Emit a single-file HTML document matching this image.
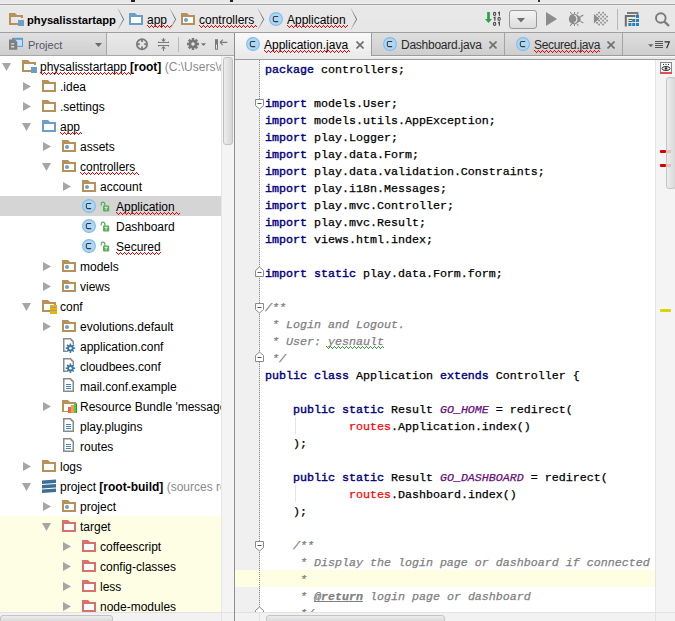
<!DOCTYPE html>
<html><head><meta charset="utf-8">
<style>
*{margin:0;padding:0;box-sizing:border-box}
html,body{width:675px;height:621px;overflow:hidden;background:#e8e8e8;font-family:"Liberation Sans",sans-serif;font-size:12px;color:#000}
.a{position:absolute}
.bc{top:7px;height:27px;line-height:27px;white-space:nowrap;font-size:12px}
.row{position:absolute;left:0;width:221px;height:20px;line-height:20px;white-space:nowrap}
.row .t{position:absolute;top:1px}
.tab{position:absolute;top:34px;height:23px;white-space:nowrap;font-size:12px;line-height:23px}
.ln{position:absolute;left:5px;margin-top:2px;height:17px;line-height:17px;white-space:pre;font-family:"Liberation Mono",monospace;font-size:11.67px;-webkit-text-stroke:0.25px currentColor}
.k{color:#000080;font-weight:normal;-webkit-text-stroke:0.4px #000080}
.c{color:#808080;font-style:italic}
.r{color:#ff0000}
.p{color:#660e7a;font-style:italic}
</style></head><body>
<div class="a" style="left:0;top:0;width:675px;height:3px;background:#e8e8e8"></div>
<div class="a" style="left:0;top:3px;width:675px;height:1px;background:#eeeeee"></div>
<div class="a" style="left:0;top:4px;width:675px;height:1px;background:#a3a3a3"></div>
<div class="a" style="left:0;top:5px;width:675px;height:27px;background:linear-gradient(#eeeeee,#e8e8e8 2px,#e7e7e7)"></div>
<div class="a" style="left:0;top:32px;width:675px;height:1px;background:#9f9f9f"></div>
<div class="a" style="left:131px;top:0;width:4px;height:2px;background:#222"></div>
<div class="a" style="left:230px;top:0;width:3px;height:2px;background:#222"></div>
<div class="a" style="left:538px;top:0;width:2px;height:2px;background:#333"></div>
<svg class="a" style="left:9px;top:13px" width="16" height="14" viewBox="0 0 16 14"><path d="M0 0H6L8 2H14V5H12V4H2V10H9V12H0Z" fill="#b8915a"/><rect x="9" y="7" width="6" height="6" fill="#6a9fc8"/></svg>
<div class="a bc" style="left:27px;font-weight:bold;font-size:11.2px">physalisstartapp</div>
<svg class="a" style="left:117px;top:8px" width="9" height="23"><defs><linearGradient id="chg1" x1="0" y1="0" x2="0" y2="1"><stop offset="0" stop-color="#d4d4d4"/><stop offset="0.5" stop-color="#505050"/><stop offset="1" stop-color="#d4d4d4"/></linearGradient></defs><path d="M0.8 0.3L6.6 11.3L0.8 21.8" fill="none" stroke="url(#chg1)" stroke-width="0.9"/></svg>
<svg class="a" style="left:129px;top:13px" width="16" height="14" viewBox="0 0 16 14"><path d="M0 0H6L8 2H14V12H0Z" fill="#6a9fc8"/><rect x="2" y="4" width="10" height="6" fill="#fff"/></svg>
<div class="a bc" style="left:147px">app</div>
<svg class="a" style="left:147px;top:25px" width="25" height="3" shape-rendering="crispEdges"><defs><pattern id="wv1" width="4" height="3" patternUnits="userSpaceOnUse"><rect x="0" y="0" width="1" height="1" fill="#ff0000"/><rect x="1" y="1" width="1" height="1" fill="#ff0000"/><rect x="2" y="2" width="1" height="1" fill="#ff0000"/><rect x="3" y="1" width="1" height="1" fill="#ff0000"/></pattern></defs><rect width="25" height="3" fill="url(#wv1)"/></svg>
<svg class="a" style="left:169px;top:8px" width="9" height="23"><defs><linearGradient id="chg2" x1="0" y1="0" x2="0" y2="1"><stop offset="0" stop-color="#d4d4d4"/><stop offset="0.5" stop-color="#505050"/><stop offset="1" stop-color="#d4d4d4"/></linearGradient></defs><path d="M0.8 0.3L6.6 11.3L0.8 21.8" fill="none" stroke="url(#chg2)" stroke-width="0.9"/></svg>
<svg class="a" style="left:181px;top:13px" width="16" height="14" viewBox="0 0 16 14"><path d="M0 0H6L8 2H14V12H0Z" fill="#b8915a"/><rect x="2" y="4" width="10" height="6" fill="#fff"/><circle cx="5" cy="7" r="2" fill="#6a9fc8"/></svg>
<div class="a bc" style="left:199px">controllers</div>
<svg class="a" style="left:199px;top:25px" width="58" height="3" shape-rendering="crispEdges"><defs><pattern id="wv2" width="4" height="3" patternUnits="userSpaceOnUse"><rect x="0" y="0" width="1" height="1" fill="#ff0000"/><rect x="1" y="1" width="1" height="1" fill="#ff0000"/><rect x="2" y="2" width="1" height="1" fill="#ff0000"/><rect x="3" y="1" width="1" height="1" fill="#ff0000"/></pattern></defs><rect width="58" height="3" fill="url(#wv2)"/></svg>
<svg class="a" style="left:257px;top:8px" width="9" height="23"><defs><linearGradient id="chg3" x1="0" y1="0" x2="0" y2="1"><stop offset="0" stop-color="#d4d4d4"/><stop offset="0.5" stop-color="#505050"/><stop offset="1" stop-color="#d4d4d4"/></linearGradient></defs><path d="M0.8 0.3L6.6 11.3L0.8 21.8" fill="none" stroke="url(#chg3)" stroke-width="0.9"/></svg>
<svg class="a" style="left:269px;top:12px" width="14" height="14" viewBox="0 0 14 14"><circle cx="7" cy="7" r="6.4" fill="#acd8f6" stroke="#80bce8" stroke-width="1.1"/><path d="M9.2 4.4H5.6Q4.3 4.4 4.3 5.7V8.3Q4.3 9.6 5.6 9.6H9.2" fill="none" stroke="#383838" stroke-width="1.05"/></svg>
<div class="a bc" style="left:287px">Application</div>
<svg class="a" style="left:287px;top:25px" width="61" height="3" shape-rendering="crispEdges"><defs><pattern id="wv3" width="4" height="3" patternUnits="userSpaceOnUse"><rect x="0" y="0" width="1" height="1" fill="#ff0000"/><rect x="1" y="1" width="1" height="1" fill="#ff0000"/><rect x="2" y="2" width="1" height="1" fill="#ff0000"/><rect x="3" y="1" width="1" height="1" fill="#ff0000"/></pattern></defs><rect width="61" height="3" fill="url(#wv3)"/></svg>
<svg class="a" style="left:350px;top:8px" width="9" height="23"><defs><linearGradient id="chg4" x1="0" y1="0" x2="0" y2="1"><stop offset="0" stop-color="#d4d4d4"/><stop offset="0.5" stop-color="#505050"/><stop offset="1" stop-color="#d4d4d4"/></linearGradient></defs><path d="M0.8 0.3L6.6 11.3L0.8 21.8" fill="none" stroke="url(#chg4)" stroke-width="0.9"/></svg>
<svg class="a" style="left:0;top:0" width="675" height="33"><path d="M488.5 12V19.5" stroke="#2ea043" stroke-width="2.7"/><path d="M485 19H492L488.5 23Z" fill="#2ea043"/><ellipse cx="494.6" cy="13.9" rx="1.15" ry="1.5" fill="none" stroke="#4a4a4a" stroke-width="1.1"/><path d="M498.1 13L499.4 12.2V15.7" fill="none" stroke="#4a4a4a" stroke-width="1.2"/><path d="M493.6 18L494.9 17.2V20.7" fill="none" stroke="#4a4a4a" stroke-width="1.2"/><ellipse cx="499.1" cy="18.9" rx="1.15" ry="1.5" fill="none" stroke="#4a4a4a" stroke-width="1.1"/><ellipse cx="494.6" cy="23.9" rx="1.15" ry="1.5" fill="none" stroke="#4a4a4a" stroke-width="1.1"/><path d="M498.1 23L499.4 22.2V25.7" fill="none" stroke="#4a4a4a" stroke-width="1.2"/><path d="M546 12L557 19L546 26Z" fill="#8c8c8c"/><circle cx="574" cy="19" r="5.2" fill="#8c8c8c"/><circle cx="577" cy="19" r="3.6" fill="#8c8c8c"/><path d="M574.2 15A4.3 4.3 0 0 1 574.2 23" fill="none" stroke="#e8e8e8" stroke-width="1.1"/><path d="M583.4 15.4A3 3 0 0 0 580.4 17.4M583.4 22.6A3 3 0 0 1 580.4 20.6" fill="none" stroke="#8c8c8c" stroke-width="1.1"/><path d="M570.2 12.2L571.6 14M574.5 12V14M578.4 12.2L577.2 14M570.2 25.8L571.6 24M574.5 26V24M578.4 25.8L577.2 24" stroke="#8c8c8c" stroke-width="1.1"/><path d="M593.9 13.9L599.4 18.8L593.9 23.6Z" fill="#8c8c8c"/><rect x="598.2" y="11.799999999999999" width="1.7" height="1.7" fill="#8c8c8c"/><rect x="602.2" y="11.799999999999999" width="1.7" height="1.7" fill="#8c8c8c"/><rect x="596.2" y="13.799999999999999" width="1.7" height="1.7" fill="#8c8c8c"/><rect x="600.2" y="13.799999999999999" width="1.7" height="1.7" fill="#8c8c8c"/><rect x="604.2" y="13.799999999999999" width="1.7" height="1.7" fill="#8c8c8c"/><rect x="598.2" y="15.8" width="1.7" height="1.7" fill="#8c8c8c"/><rect x="602.2" y="15.8" width="1.7" height="1.7" fill="#8c8c8c"/><rect x="606.2" y="15.8" width="1.7" height="1.7" fill="#8c8c8c"/><rect x="600.2" y="17.8" width="1.7" height="1.7" fill="#8c8c8c"/><rect x="604.2" y="17.8" width="1.7" height="1.7" fill="#8c8c8c"/><rect x="602.2" y="19.8" width="1.7" height="1.7" fill="#8c8c8c"/><rect x="606.2" y="19.8" width="1.7" height="1.7" fill="#8c8c8c"/><rect x="600.2" y="21.8" width="1.7" height="1.7" fill="#8c8c8c"/><rect x="604.2" y="21.8" width="1.7" height="1.7" fill="#8c8c8c"/><rect x="596.2" y="22.0" width="1.7" height="1.7" fill="#8c8c8c"/><rect x="598.2" y="23.7" width="1.7" height="1.7" fill="#8c8c8c"/><rect x="602.2" y="23.7" width="1.7" height="1.7" fill="#8c8c8c"/><rect x="598.2" y="19.8" width="1.7" height="1.7" fill="#8c8c8c"/><path d="M627 13H637.5V17.5" fill="none" stroke="#7a7a7a" stroke-width="1.8"/><path d="M624.8 15H635.5V17H626.8V26.5H624.8Z" fill="#6e6e6e"/><path d="M628.5 19.5H632M628.5 21.5H632" stroke="#555" stroke-width="1"/><rect x="636" y="15" width="3" height="3" fill="#2a7fc0"/><rect x="632.2" y="19" width="3" height="3" fill="#2a7fc0"/><rect x="636" y="19" width="3" height="3" fill="#2a7fc0"/><rect x="628.4" y="23" width="3" height="3" fill="#2a7fc0"/><rect x="632.2" y="23" width="3" height="3" fill="#2a7fc0"/><rect x="636" y="23" width="3" height="3" fill="#2a7fc0"/><circle cx="660.8" cy="18" r="4.8" fill="none" stroke="#7a7a7a" stroke-width="1.9"/><path d="M664.3 21.5L669 26" stroke="#7a7a7a" stroke-width="2.4"/></svg>
<div class="a" style="left:509px;top:10px;width:28px;height:19px;border:1px solid #9a9a9a;border-radius:3px;background:linear-gradient(#f4f4f4,#dcdcdc)"></div>
<svg class="a" style="left:517px;top:18px" width="9" height="6"><path d="M0 0H8L4 4.5Z" fill="#6e6e6e"/></svg>
<div class="a" style="left:617px;top:9px;width:1px;height:21px;background:#b8b8b8"></div>
<div class="a" style="left:0;top:33px;width:234px;height:22px;background:linear-gradient(#e9e9e9,#dedede)"></div>
<div class="a" style="left:0;top:33px;width:106px;height:22px;background:linear-gradient(#e0e0e0,#cecece)"></div>
<div class="a" style="left:106px;top:33px;width:1px;height:22px;background:#a8a8a8"></div>
<div class="a" style="left:0;top:55px;width:234px;height:1px;background:#a8a8a8"></div>
<svg class="a" style="left:0;top:33px" width="30" height="22" viewBox="0 33 30 22"><rect x="12" y="37.8" width="11" height="9" fill="#5b9bd5"/><rect x="13" y="39.8" width="9" height="6" fill="#bfe0f6"/><path d="M9 39.6H15L17.3 41.9V49.8H9Z" fill="#7f7f7f"/><path d="M11.2 43.2H14.2V44.6H11.2ZM11.2 46H14.2V47.6H11.2Z" fill="#e0e0e0"/></svg>
<div class="a" style="left:28px;top:34px;height:22px;line-height:22px;font-size:11px;color:#555566">Project</div>
<svg class="a" style="left:95px;top:43px" width="8" height="5"><path d="M0 0H7L3.5 4Z" fill="#6a6a6a"/></svg>
<svg class="a" style="left:0;top:33px" width="234" height="22" viewBox="0 33 234 22"><circle cx="142" cy="44.2" r="5.1" fill="none" stroke="#7a7a7a" stroke-width="1.8"/><path d="M142 39.5V42M142 46.4V49M137.3 44.2H139.8M144.2 44.2H146.7" stroke="#7a7a7a" stroke-width="1.8"/><path d="M158.5 41.5V42.5H168.5V41.5M158.5 46.5V45.5H168.5V46.5" fill="none" stroke="#7a7a7a" stroke-width="1.1"/><path d="M163.5 38V41M163.5 47V51" stroke="#7a7a7a" stroke-width="1.1"/><path d="M161 39.5H166L163.5 42Z M161 48.5H166L163.5 46Z" fill="#7a7a7a"/><g transform="translate(193,44)"><circle r="4.3" fill="#787878"/><rect x="-1.3" y="-6" width="2.6" height="3" fill="#787878" transform="rotate(0)"/><rect x="-1.3" y="-6" width="2.6" height="3" fill="#787878" transform="rotate(45)"/><rect x="-1.3" y="-6" width="2.6" height="3" fill="#787878" transform="rotate(90)"/><rect x="-1.3" y="-6" width="2.6" height="3" fill="#787878" transform="rotate(135)"/><rect x="-1.3" y="-6" width="2.6" height="3" fill="#787878" transform="rotate(180)"/><rect x="-1.3" y="-6" width="2.6" height="3" fill="#787878" transform="rotate(225)"/><rect x="-1.3" y="-6" width="2.6" height="3" fill="#787878" transform="rotate(270)"/><rect x="-1.3" y="-6" width="2.6" height="3" fill="#787878" transform="rotate(315)"/><circle r="1.7" fill="#e6e6e6"/></g><path d="M201 43.3H206L203.5 46Z" fill="#777"/><rect x="215" y="39.2" width="3" height="10.5" fill="#7a7a7a"/><rect x="216" y="44.5" width="1" height="4.2" fill="#e6e6e6"/><path d="M220 42.4H227.3M220 42.4L222.8 39.6M220 42.4L222.8 45.2" fill="none" stroke="#7a7a7a" stroke-width="1.2"/></svg>
<div class="a" style="left:178px;top:37px;width:1px;height:15px;background:#b8b8b8"></div>
<div class="a" style="left:0;top:56px;width:221px;height:556px;background:#fff;overflow:hidden">
<div class="row" style="top:0px;">
<svg class="a" style="left:2px;top:7px" width="10" height="9"><path d="M0 0H9L4.5 8Z" fill="#a6a6a6"/></svg>
<svg class="a" style="left:22px;top:4px" width="16" height="14" viewBox="0 0 16 14"><path d="M0 0H6L8 2H14V5H12V4H2V10H9V12H0Z" fill="#b8915a"/><rect x="9" y="7" width="6" height="6" fill="#6a9fc8"/></svg>
<div class="t" style="left:40px">physalisstartapp <b>[root]</b> <span style="color:#8a8a8a">(C:\Users\c</span></div>
</div>
<div class="row" style="top:20px;">
<svg class="a" style="left:23px;top:6px" width="9" height="10"><path d="M0 0L8 4.5L0 9Z" fill="#a6a6a6"/></svg>
<svg class="a" style="left:42px;top:4px" width="16" height="14" viewBox="0 0 16 14"><path d="M0 0H6L8 2H14V12H0Z" fill="#b8915a"/><rect x="2" y="4" width="10" height="6" fill="#fff"/></svg>
<div class="t" style="left:60px">.idea</div>
</div>
<div class="row" style="top:40px;">
<svg class="a" style="left:23px;top:6px" width="9" height="10"><path d="M0 0L8 4.5L0 9Z" fill="#a6a6a6"/></svg>
<svg class="a" style="left:42px;top:4px" width="16" height="14" viewBox="0 0 16 14"><path d="M0 0H6L8 2H14V12H0Z" fill="#b8915a"/><rect x="2" y="4" width="10" height="6" fill="#fff"/></svg>
<div class="t" style="left:60px">.settings</div>
</div>
<div class="row" style="top:60px;">
<svg class="a" style="left:22px;top:7px" width="10" height="9"><path d="M0 0H9L4.5 8Z" fill="#a6a6a6"/></svg>
<svg class="a" style="left:42px;top:4px" width="16" height="14" viewBox="0 0 16 14"><path d="M0 0H6L8 2H14V12H0Z" fill="#6a9fc8"/><rect x="2" y="4" width="10" height="6" fill="#fff"/></svg>
<div class="t" style="left:60px">app</div>
</div>
<div class="row" style="top:80px;">
<svg class="a" style="left:43px;top:6px" width="9" height="10"><path d="M0 0L8 4.5L0 9Z" fill="#a6a6a6"/></svg>
<svg class="a" style="left:62px;top:4px" width="16" height="14" viewBox="0 0 16 14"><path d="M0 0H6L8 2H14V12H0Z" fill="#b8915a"/><rect x="2" y="4" width="10" height="6" fill="#fff"/><circle cx="5" cy="7" r="2" fill="#6a9fc8"/></svg>
<div class="t" style="left:80px">assets</div>
</div>
<div class="row" style="top:100px;">
<svg class="a" style="left:42px;top:7px" width="10" height="9"><path d="M0 0H9L4.5 8Z" fill="#a6a6a6"/></svg>
<svg class="a" style="left:62px;top:4px" width="16" height="14" viewBox="0 0 16 14"><path d="M0 0H6L8 2H14V12H0Z" fill="#b8915a"/><rect x="2" y="4" width="10" height="6" fill="#fff"/><circle cx="5" cy="7" r="2" fill="#6a9fc8"/></svg>
<div class="t" style="left:80px">controllers</div>
</div>
<div class="row" style="top:120px;">
<svg class="a" style="left:63px;top:6px" width="9" height="10"><path d="M0 0L8 4.5L0 9Z" fill="#a6a6a6"/></svg>
<svg class="a" style="left:82px;top:4px" width="16" height="14" viewBox="0 0 16 14"><path d="M0 0H6L8 2H14V12H0Z" fill="#b8915a"/><rect x="2" y="4" width="10" height="6" fill="#fff"/><circle cx="5" cy="7" r="2" fill="#6a9fc8"/></svg>
<div class="t" style="left:100px">account</div>
</div>
<div class="row" style="top:140px;background:#d5d5d5;">
<svg class="a" style="left:82px;top:3px" width="14" height="14" viewBox="0 0 14 14"><circle cx="7" cy="7" r="6.4" fill="#acd8f6" stroke="#80bce8" stroke-width="1.1"/><path d="M9.2 4.4H5.6Q4.3 4.4 4.3 5.7V8.3Q4.3 9.6 5.6 9.6H9.2" fill="none" stroke="#383838" stroke-width="1.05"/></svg>
<svg class="a" style="left:100px;top:5px" width="10" height="11" viewBox="0 0 10 11"><path d="M1.2 4.6V3A1.8 1.8 0 0 1 4.8 3V5" fill="none" stroke="#5aae5a" stroke-width="1.2"/><rect x="3" y="4.6" width="6.2" height="5.8" rx="0.9" fill="#5aae5a"/><path d="M4.6 6.4H7.6M6.1 6.4V9.2" stroke="#e6f2e6" stroke-width="1"/></svg>
<div class="t" style="left:116px">Application</div>
</div>
<div class="row" style="top:160px;">
<svg class="a" style="left:82px;top:3px" width="14" height="14" viewBox="0 0 14 14"><circle cx="7" cy="7" r="6.4" fill="#acd8f6" stroke="#80bce8" stroke-width="1.1"/><path d="M9.2 4.4H5.6Q4.3 4.4 4.3 5.7V8.3Q4.3 9.6 5.6 9.6H9.2" fill="none" stroke="#383838" stroke-width="1.05"/></svg>
<svg class="a" style="left:100px;top:5px" width="10" height="11" viewBox="0 0 10 11"><path d="M1.2 4.6V3A1.8 1.8 0 0 1 4.8 3V5" fill="none" stroke="#5aae5a" stroke-width="1.2"/><rect x="3" y="4.6" width="6.2" height="5.8" rx="0.9" fill="#5aae5a"/><path d="M4.6 6.4H7.6M6.1 6.4V9.2" stroke="#e6f2e6" stroke-width="1"/></svg>
<div class="t" style="left:116px">Dashboard</div>
</div>
<div class="row" style="top:180px;">
<svg class="a" style="left:82px;top:3px" width="14" height="14" viewBox="0 0 14 14"><circle cx="7" cy="7" r="6.4" fill="#acd8f6" stroke="#80bce8" stroke-width="1.1"/><path d="M9.2 4.4H5.6Q4.3 4.4 4.3 5.7V8.3Q4.3 9.6 5.6 9.6H9.2" fill="none" stroke="#383838" stroke-width="1.05"/></svg>
<svg class="a" style="left:100px;top:5px" width="10" height="11" viewBox="0 0 10 11"><path d="M1.2 4.6V3A1.8 1.8 0 0 1 4.8 3V5" fill="none" stroke="#5aae5a" stroke-width="1.2"/><rect x="3" y="4.6" width="6.2" height="5.8" rx="0.9" fill="#5aae5a"/><path d="M4.6 6.4H7.6M6.1 6.4V9.2" stroke="#e6f2e6" stroke-width="1"/></svg>
<div class="t" style="left:116px">Secured</div>
</div>
<div class="row" style="top:200px;">
<svg class="a" style="left:43px;top:6px" width="9" height="10"><path d="M0 0L8 4.5L0 9Z" fill="#a6a6a6"/></svg>
<svg class="a" style="left:62px;top:4px" width="16" height="14" viewBox="0 0 16 14"><path d="M0 0H6L8 2H14V12H0Z" fill="#b8915a"/><rect x="2" y="4" width="10" height="6" fill="#fff"/><circle cx="5" cy="7" r="2" fill="#6a9fc8"/></svg>
<div class="t" style="left:80px">models</div>
</div>
<div class="row" style="top:220px;">
<svg class="a" style="left:43px;top:6px" width="9" height="10"><path d="M0 0L8 4.5L0 9Z" fill="#a6a6a6"/></svg>
<svg class="a" style="left:62px;top:4px" width="16" height="14" viewBox="0 0 16 14"><path d="M0 0H6L8 2H14V12H0Z" fill="#b8915a"/><rect x="2" y="4" width="10" height="6" fill="#fff"/><circle cx="5" cy="7" r="2" fill="#6a9fc8"/></svg>
<div class="t" style="left:80px">views</div>
</div>
<div class="row" style="top:240px;">
<svg class="a" style="left:22px;top:7px" width="10" height="9"><path d="M0 0H9L4.5 8Z" fill="#a6a6a6"/></svg>
<svg class="a" style="left:42px;top:4px" width="16" height="14" viewBox="0 0 16 14"><path d="M0 0H6L8 2H14V5H12V4H2V10H9V12H0Z" fill="#b8915a"/><rect x="8" y="5" width="7" height="9" fill="#f0b400"/><path d="M8 7.5H15M8 10.5H15" stroke="#9a9a9a" stroke-width="1"/></svg>
<div class="t" style="left:60px">conf</div>
</div>
<div class="row" style="top:260px;">
<svg class="a" style="left:43px;top:6px" width="9" height="10"><path d="M0 0L8 4.5L0 9Z" fill="#a6a6a6"/></svg>
<svg class="a" style="left:62px;top:4px" width="16" height="14" viewBox="0 0 16 14"><path d="M0 0H6L8 2H14V12H0Z" fill="#b8915a"/><rect x="2" y="4" width="10" height="6" fill="#fff"/><circle cx="5" cy="7" r="2" fill="#6a9fc8"/></svg>
<div class="t" style="left:80px">evolutions.default</div>
</div>
<div class="row" style="top:280px;">
<svg class="a" style="left:62px;top:1px" width="14" height="16" viewBox="0 0 14 16"><path d="M1.75 1.75H8.5L11.25 4.5V14.25H1.75Z" fill="#fff" stroke="#8a8a8a" stroke-width="1.5"/><path d="M8.8 1.8V4.2H11.2Z" fill="#8a8a8a"/><g transform="translate(8.4,11.2)"><circle r="4.8" fill="#fff"/><circle r="3.2" fill="#3a79a5"/><rect x="-0.8" y="-4.7" width="1.6" height="2.5" fill="#3a79a5" transform="rotate(0)"/><rect x="-0.8" y="-4.7" width="1.6" height="2.5" fill="#3a79a5" transform="rotate(45)"/><rect x="-0.8" y="-4.7" width="1.6" height="2.5" fill="#3a79a5" transform="rotate(90)"/><rect x="-0.8" y="-4.7" width="1.6" height="2.5" fill="#3a79a5" transform="rotate(135)"/><rect x="-0.8" y="-4.7" width="1.6" height="2.5" fill="#3a79a5" transform="rotate(180)"/><rect x="-0.8" y="-4.7" width="1.6" height="2.5" fill="#3a79a5" transform="rotate(225)"/><rect x="-0.8" y="-4.7" width="1.6" height="2.5" fill="#3a79a5" transform="rotate(270)"/><rect x="-0.8" y="-4.7" width="1.6" height="2.5" fill="#3a79a5" transform="rotate(315)"/><circle r="1.3" fill="#fff"/></g></svg>
<div class="t" style="left:80px">application.conf</div>
</div>
<div class="row" style="top:300px;">
<svg class="a" style="left:62px;top:1px" width="14" height="16" viewBox="0 0 14 16"><path d="M1.75 1.75H8.5L11.25 4.5V14.25H1.75Z" fill="#fff" stroke="#8a8a8a" stroke-width="1.5"/><path d="M8.8 1.8V4.2H11.2Z" fill="#8a8a8a"/><g transform="translate(8.4,11.2)"><circle r="4.8" fill="#fff"/><circle r="3.2" fill="#3a79a5"/><rect x="-0.8" y="-4.7" width="1.6" height="2.5" fill="#3a79a5" transform="rotate(0)"/><rect x="-0.8" y="-4.7" width="1.6" height="2.5" fill="#3a79a5" transform="rotate(45)"/><rect x="-0.8" y="-4.7" width="1.6" height="2.5" fill="#3a79a5" transform="rotate(90)"/><rect x="-0.8" y="-4.7" width="1.6" height="2.5" fill="#3a79a5" transform="rotate(135)"/><rect x="-0.8" y="-4.7" width="1.6" height="2.5" fill="#3a79a5" transform="rotate(180)"/><rect x="-0.8" y="-4.7" width="1.6" height="2.5" fill="#3a79a5" transform="rotate(225)"/><rect x="-0.8" y="-4.7" width="1.6" height="2.5" fill="#3a79a5" transform="rotate(270)"/><rect x="-0.8" y="-4.7" width="1.6" height="2.5" fill="#3a79a5" transform="rotate(315)"/><circle r="1.3" fill="#fff"/></g></svg>
<div class="t" style="left:80px">cloudbees.conf</div>
</div>
<div class="row" style="top:320px;">
<svg class="a" style="left:62px;top:1px" width="14" height="16" viewBox="0 0 14 16"><path d="M1.75 1.75H8.5L11.25 4.5V14.25H1.75Z" fill="#fff" stroke="#8a8a8a" stroke-width="1.5"/><path d="M8.8 1.8V4.2H11.2Z" fill="#8a8a8a"/><path d="M4 7.5H9M4 9.5H9M4 11.5H9" stroke="#3d85c0" stroke-width="1"/></svg>
<div class="t" style="left:80px">mail.conf.example</div>
</div>
<div class="row" style="top:340px;">
<svg class="a" style="left:43px;top:6px" width="9" height="10"><path d="M0 0L8 4.5L0 9Z" fill="#a6a6a6"/></svg>
<svg class="a" style="left:62px;top:4px" width="16" height="14" viewBox="0 0 16 14"><path d="M0 0H6L8 2H14V4H12V4H2V11H6V12H0Z" fill="#b8915a"/><rect x="6" y="7" width="3" height="6" fill="#e8625a"/><rect x="9" y="5" width="3" height="8" fill="#f0a040"/><rect x="12" y="3.5" width="3" height="9.5" fill="#4cc84c"/><path d="M14.5 3.5V13" stroke="#2a9a2a" stroke-width="1"/></svg>
<div class="t" style="left:80px">Resource Bundle 'messages'</div>
</div>
<div class="row" style="top:360px;">
<svg class="a" style="left:62px;top:1px" width="14" height="16" viewBox="0 0 14 16"><path d="M1.75 1.75H8.5L11.25 4.5V14.25H1.75Z" fill="#fff" stroke="#8a8a8a" stroke-width="1.5"/><path d="M8.8 1.8V4.2H11.2Z" fill="#8a8a8a"/><path d="M4 7.5H9M4 9.5H9M4 11.5H9" stroke="#3d85c0" stroke-width="1"/></svg>
<div class="t" style="left:80px">play.plugins</div>
</div>
<div class="row" style="top:380px;">
<svg class="a" style="left:62px;top:1px" width="14" height="16" viewBox="0 0 14 16"><path d="M1.75 1.75H8.5L11.25 4.5V14.25H1.75Z" fill="#fff" stroke="#8a8a8a" stroke-width="1.5"/><path d="M8.8 1.8V4.2H11.2Z" fill="#8a8a8a"/><path d="M4 7.5H9M4 9.5H9M4 11.5H9" stroke="#3d85c0" stroke-width="1"/></svg>
<div class="t" style="left:80px">routes</div>
</div>
<div class="row" style="top:400px;">
<svg class="a" style="left:23px;top:6px" width="9" height="10"><path d="M0 0L8 4.5L0 9Z" fill="#a6a6a6"/></svg>
<svg class="a" style="left:42px;top:4px" width="16" height="14" viewBox="0 0 16 14"><path d="M0 0H6L8 2H14V12H0Z" fill="#b8915a"/><rect x="2" y="4" width="10" height="6" fill="#fff"/></svg>
<div class="t" style="left:60px">logs</div>
</div>
<div class="row" style="top:420px;">
<svg class="a" style="left:22px;top:7px" width="10" height="9"><path d="M0 0H9L4.5 8Z" fill="#a6a6a6"/></svg>
<svg class="a" style="left:42px;top:3px" width="15" height="15" viewBox="0 0 15 15"><path d="M0 1.5L14 0.5V4L0 5Z M0 6L14 5V8.5L0 9.5Z M0 10.5L14 9.5V13L0 14Z" fill="#3c6e96"/></svg>
<div class="t" style="left:60px">project <b>[root-build]</b> <span style="color:#8a8a8a">(sources root)</span></div>
</div>
<div class="row" style="top:440px;">
<svg class="a" style="left:43px;top:6px" width="9" height="10"><path d="M0 0L8 4.5L0 9Z" fill="#a6a6a6"/></svg>
<svg class="a" style="left:62px;top:4px" width="16" height="14" viewBox="0 0 16 14"><path d="M0 0H6L8 2H14V12H0Z" fill="#b8915a"/><rect x="2" y="4" width="10" height="6" fill="#fff"/><circle cx="5" cy="7" r="2" fill="#6a9fc8"/></svg>
<div class="t" style="left:80px">project</div>
</div>
<div class="row" style="top:460px;background:#fefee4;">
<svg class="a" style="left:42px;top:7px" width="10" height="9"><path d="M0 0H9L4.5 8Z" fill="#a6a6a6"/></svg>
<svg class="a" style="left:62px;top:4px" width="16" height="14" viewBox="0 0 16 14"><path d="M0 0H6L8 2H14V12H0Z" fill="#d9706a"/><rect x="2" y="4" width="10" height="6" fill="#fff"/></svg>
<div class="t" style="left:80px">target</div>
</div>
<div class="row" style="top:480px;background:#fefee4;">
<svg class="a" style="left:63px;top:6px" width="9" height="10"><path d="M0 0L8 4.5L0 9Z" fill="#a6a6a6"/></svg>
<svg class="a" style="left:82px;top:4px" width="16" height="14" viewBox="0 0 16 14"><path d="M0 0H6L8 2H14V12H0Z" fill="#d9706a"/><rect x="2" y="4" width="10" height="6" fill="#fff"/></svg>
<div class="t" style="left:100px">coffeescript</div>
</div>
<div class="row" style="top:500px;background:#fefee4;">
<svg class="a" style="left:63px;top:6px" width="9" height="10"><path d="M0 0L8 4.5L0 9Z" fill="#a6a6a6"/></svg>
<svg class="a" style="left:82px;top:4px" width="16" height="14" viewBox="0 0 16 14"><path d="M0 0H6L8 2H14V12H0Z" fill="#d9706a"/><rect x="2" y="4" width="10" height="6" fill="#fff"/></svg>
<div class="t" style="left:100px">config-classes</div>
</div>
<div class="row" style="top:520px;background:#fefee4;">
<svg class="a" style="left:63px;top:6px" width="9" height="10"><path d="M0 0L8 4.5L0 9Z" fill="#a6a6a6"/></svg>
<svg class="a" style="left:82px;top:4px" width="16" height="14" viewBox="0 0 16 14"><path d="M0 0H6L8 2H14V12H0Z" fill="#d9706a"/><rect x="2" y="4" width="10" height="6" fill="#fff"/></svg>
<div class="t" style="left:100px">less</div>
</div>
<div class="row" style="top:540px;background:#fefee4;">
<svg class="a" style="left:63px;top:6px" width="9" height="10"><path d="M0 0L8 4.5L0 9Z" fill="#a6a6a6"/></svg>
<svg class="a" style="left:82px;top:4px" width="16" height="14" viewBox="0 0 16 14"><path d="M0 0H6L8 2H14V12H0Z" fill="#d9706a"/><rect x="2" y="4" width="10" height="6" fill="#fff"/></svg>
<div class="t" style="left:100px">node-modules</div>
</div>
<svg class="a" style="left:40px;top:16px" width="92" height="3" shape-rendering="crispEdges"><defs><pattern id="wv4" width="4" height="3" patternUnits="userSpaceOnUse"><rect x="0" y="0" width="1" height="1" fill="#ff0000"/><rect x="1" y="1" width="1" height="1" fill="#ff0000"/><rect x="2" y="2" width="1" height="1" fill="#ff0000"/><rect x="3" y="1" width="1" height="1" fill="#ff0000"/></pattern></defs><rect width="92" height="3" fill="url(#wv4)"/></svg>
<svg class="a" style="left:60px;top:76px" width="22" height="3" shape-rendering="crispEdges"><defs><pattern id="wv5" width="4" height="3" patternUnits="userSpaceOnUse"><rect x="0" y="0" width="1" height="1" fill="#ff0000"/><rect x="1" y="1" width="1" height="1" fill="#ff0000"/><rect x="2" y="2" width="1" height="1" fill="#ff0000"/><rect x="3" y="1" width="1" height="1" fill="#ff0000"/></pattern></defs><rect width="22" height="3" fill="url(#wv5)"/></svg>
<svg class="a" style="left:80px;top:116px" width="59" height="3" shape-rendering="crispEdges"><defs><pattern id="wv6" width="4" height="3" patternUnits="userSpaceOnUse"><rect x="0" y="0" width="1" height="1" fill="#ff0000"/><rect x="1" y="1" width="1" height="1" fill="#ff0000"/><rect x="2" y="2" width="1" height="1" fill="#ff0000"/><rect x="3" y="1" width="1" height="1" fill="#ff0000"/></pattern></defs><rect width="59" height="3" fill="url(#wv6)"/></svg>
<svg class="a" style="left:116px;top:156px" width="64" height="3" shape-rendering="crispEdges"><defs><pattern id="wv7" width="4" height="3" patternUnits="userSpaceOnUse"><rect x="0" y="0" width="1" height="1" fill="#ff0000"/><rect x="1" y="1" width="1" height="1" fill="#ff0000"/><rect x="2" y="2" width="1" height="1" fill="#ff0000"/><rect x="3" y="1" width="1" height="1" fill="#ff0000"/></pattern></defs><rect width="64" height="3" fill="url(#wv7)"/></svg>
<svg class="a" style="left:116px;top:196px" width="45" height="3" shape-rendering="crispEdges"><defs><pattern id="wv8" width="4" height="3" patternUnits="userSpaceOnUse"><rect x="0" y="0" width="1" height="1" fill="#ff0000"/><rect x="1" y="1" width="1" height="1" fill="#ff0000"/><rect x="2" y="2" width="1" height="1" fill="#ff0000"/><rect x="3" y="1" width="1" height="1" fill="#ff0000"/></pattern></defs><rect width="45" height="3" fill="url(#wv8)"/></svg>
</div>
<div class="a" style="left:221px;top:56px;width:13px;height:556px;background:#f4f4f4;border-left:1px solid #e6e6e6"></div>
<div class="a" style="left:223px;top:57px;width:10px;height:88px;border:1px solid #c0c0c0;border-radius:3px;background:linear-gradient(90deg,#ececec,#d6d6d6)"></div>
<div class="a" style="left:234px;top:33px;width:1px;height:588px;background:#8f8f8f"></div>
<div class="a" style="left:235px;top:33px;width:440px;height:26px;background:#e9e9e9"></div>
<div class="a" style="left:371px;top:33px;width:304px;height:22px;background:linear-gradient(#dedede,#cecece)"></div>
<div class="a" style="left:371px;top:55px;width:304px;height:1px;background:#9c9c9c"></div>
<div class="a" style="left:371px;top:56px;width:304px;height:1px;background:#f8f8f8"></div>
<div class="a" style="left:235px;top:33px;width:136px;height:26px;background:linear-gradient(#f9f9f9,#e9e9e9)"></div>
<div class="a" style="left:371px;top:33px;width:1px;height:23px;background:#9c9c9c"></div>
<div class="a" style="left:504px;top:33px;width:1px;height:22px;background:#a4a4a4"></div>
<div class="a" style="left:622px;top:33px;width:1px;height:22px;background:#a4a4a4"></div>
<div class="a" style="left:235px;top:59px;width:440px;height:1px;background:#9d9d9d"></div>
<svg class="a" style="left:246px;top:37px" width="14" height="14" viewBox="0 0 14 14"><circle cx="7" cy="7" r="6.4" fill="#acd8f6" stroke="#80bce8" stroke-width="1.1"/><path d="M9.2 4.4H5.6Q4.3 4.4 4.3 5.7V8.3Q4.3 9.6 5.6 9.6H9.2" fill="none" stroke="#383838" stroke-width="1.05"/></svg>
<div class="tab" style="left:264px">Application.java</div>
<svg class="a" style="left:264px;top:50px" width="86" height="3" shape-rendering="crispEdges"><defs><pattern id="wv9" width="4" height="3" patternUnits="userSpaceOnUse"><rect x="0" y="0" width="1" height="1" fill="#ff0000"/><rect x="1" y="1" width="1" height="1" fill="#ff0000"/><rect x="2" y="2" width="1" height="1" fill="#ff0000"/><rect x="3" y="1" width="1" height="1" fill="#ff0000"/></pattern></defs><rect width="86" height="3" fill="url(#wv9)"/></svg>
<svg class="a" style="left:356px;top:41px" width="8" height="8"><path d="M0.5 0.5L7.5 7.5M7.5 0.5L0.5 7.5" stroke="#6e6e6e" stroke-width="1.6"/></svg>
<svg class="a" style="left:383px;top:37px" width="14" height="14" viewBox="0 0 14 14"><circle cx="7" cy="7" r="6.4" fill="#acd8f6" stroke="#80bce8" stroke-width="1.1"/><path d="M9.2 4.4H5.6Q4.3 4.4 4.3 5.7V8.3Q4.3 9.6 5.6 9.6H9.2" fill="none" stroke="#383838" stroke-width="1.05"/></svg>
<div class="tab" style="left:401px;letter-spacing:-0.25px;color:#2a2a2a">Dashboard.java</div>
<svg class="a" style="left:489px;top:41px" width="8" height="8"><path d="M0.5 0.5L7.5 7.5M7.5 0.5L0.5 7.5" stroke="#6e6e6e" stroke-width="1.6"/></svg>
<svg class="a" style="left:516px;top:37px" width="14" height="14" viewBox="0 0 14 14"><circle cx="7" cy="7" r="6.4" fill="#acd8f6" stroke="#80bce8" stroke-width="1.1"/><path d="M9.2 4.4H5.6Q4.3 4.4 4.3 5.7V8.3Q4.3 9.6 5.6 9.6H9.2" fill="none" stroke="#383838" stroke-width="1.05"/></svg>
<div class="tab" style="left:534px;letter-spacing:-0.33px;color:#2a2a2a">Secured.java</div>
<svg class="a" style="left:534px;top:50px" width="66" height="3" shape-rendering="crispEdges"><defs><pattern id="wv10" width="4" height="3" patternUnits="userSpaceOnUse"><rect x="0" y="0" width="1" height="1" fill="#ff0000"/><rect x="1" y="1" width="1" height="1" fill="#ff0000"/><rect x="2" y="2" width="1" height="1" fill="#ff0000"/><rect x="3" y="1" width="1" height="1" fill="#ff0000"/></pattern></defs><rect width="66" height="3" fill="url(#wv10)"/></svg>
<svg class="a" style="left:607px;top:41px" width="8" height="8"><path d="M0.5 0.5L7.5 7.5M7.5 0.5L0.5 7.5" stroke="#6e6e6e" stroke-width="1.6"/></svg>
<svg class="a" style="left:0;top:33px" width="675" height="22" viewBox="0 33 675 22"><path d="M648 44.2H653.5L650.75 47Z" fill="#666"/><path d="M655 41.5H663M655 43.5H663M655 45.5H663M655 47.5H663" stroke="#555" stroke-width="1"/><path d="M664.5 41.9H669.3L666.6 48.2" fill="none" stroke="#2a2a2a" stroke-width="1.15"/></svg>
<div class="a" style="left:235px;top:60px;width:24px;height:552px;background:#f0f0f0"></div>
<div class="a" style="left:260px;top:60px;width:395px;height:552px;background:#fff"></div>
<div class="a" style="left:235px;top:570px;width:420px;height:17px;background:#fefee2"></div>
<div class="a" style="left:259px;top:60px;width:1px;height:552px;background-image:linear-gradient(#8c8c8c 50%,transparent 50%);background-size:1px 2px"></div>
<div class="a" style="left:655px;top:60px;width:20px;height:552px;background:#f4f4f4;border-left:1px solid #e4e4e4"></div>
<div class="a" style="left:260px;top:60px;width:395px;height:552px;overflow:hidden">
<div class="ln" style="top:0px"><span class="k">package</span> controllers;</div>
<div class="ln" style="top:17px"></div>
<div class="ln" style="top:34px"><span class="k">import</span> models.User;</div>
<div class="ln" style="top:51px"><span class="k">import</span> models.utils.AppException;</div>
<div class="ln" style="top:68px"><span class="k">import</span> play.Logger;</div>
<div class="ln" style="top:85px"><span class="k">import</span> play.data.Form;</div>
<div class="ln" style="top:102px"><span class="k">import</span> play.data.validation.Constraints;</div>
<div class="ln" style="top:119px"><span class="k">import</span> play.i18n.Messages;</div>
<div class="ln" style="top:136px"><span class="k">import</span> play.mvc.Controller;</div>
<div class="ln" style="top:153px"><span class="k">import</span> play.mvc.Result;</div>
<div class="ln" style="top:170px"><span class="k">import</span> views.html.index;</div>
<div class="ln" style="top:187px"></div>
<div class="ln" style="top:204px"><span class="k">import static</span> play.data.Form.form;</div>
<div class="ln" style="top:221px"></div>
<div class="ln" style="top:238px"><span class="c">/**</span></div>
<div class="ln" style="top:255px"><span class="c"> * Login and Logout.</span></div>
<div class="ln" style="top:272px"><span class="c"> * User: yesnault</span></div>
<div class="ln" style="top:289px"><span class="c"> */</span></div>
<div class="ln" style="top:306px"><span class="k">public class</span> Application <span class="k">extends</span> Controller {</div>
<div class="ln" style="top:323px"></div>
<div class="ln" style="top:340px">    <span class="k">public static</span> Result <span class="p">GO_HOME</span> = redirect(</div>
<div class="ln" style="top:357px">            <span class="r">routes</span>.Application.index()</div>
<div class="ln" style="top:374px">    );</div>
<div class="ln" style="top:391px"></div>
<div class="ln" style="top:408px">    <span class="k">public static</span> Result <span class="p">GO_DASHBOARD</span> = redirect(</div>
<div class="ln" style="top:425px">            <span class="r">routes</span>.Dashboard.index()</div>
<div class="ln" style="top:442px">    );</div>
<div class="ln" style="top:459px"></div>
<div class="ln" style="top:476px">    <span class="c">/**</span></div>
<div class="ln" style="top:493px">    <span class="c"> * Display the login page or dashboard if connected</span></div>
<div class="ln" style="top:510px">    <span class="c"> *</span></div>
<div class="ln" style="top:527px">    <span class="c"> * <u style="font-weight:bold;text-decoration-skip-ink:none">@return</u> login page or dashboard</span></div>
<div class="ln" style="top:544px">    <span class="c"> */</span></div>
</div>
<svg class="a" style="left:255px;top:99px" width="10" height="11" viewBox="0 0 10 11"><path d="M0.5 0.5H8.5V6.5L4.5 10L0.5 6.5Z" fill="#fff" stroke="#8a8a8a" stroke-width="1"/><path d="M2.5 4.5H6.5" stroke="#555" stroke-width="1"/></svg>
<svg class="a" style="left:255px;top:303px" width="10" height="11" viewBox="0 0 10 11"><path d="M0.5 0.5H8.5V6.5L4.5 10L0.5 6.5Z" fill="#fff" stroke="#8a8a8a" stroke-width="1"/><path d="M2.5 4.5H6.5" stroke="#555" stroke-width="1"/></svg>
<svg class="a" style="left:255px;top:541px" width="10" height="11" viewBox="0 0 10 11"><path d="M0.5 0.5H8.5V6.5L4.5 10L0.5 6.5Z" fill="#fff" stroke="#8a8a8a" stroke-width="1"/><path d="M2.5 4.5H6.5" stroke="#555" stroke-width="1"/></svg>
<svg class="a" style="left:255px;top:266px" width="10" height="11" viewBox="0 0 10 11"><path d="M0.5 10.5H8.5V4.5L4.5 1L0.5 4.5Z" fill="#fff" stroke="#8a8a8a" stroke-width="1"/><path d="M2.5 6.5H6.5" stroke="#555" stroke-width="1"/></svg>
<svg class="a" style="left:255px;top:351px" width="10" height="11" viewBox="0 0 10 11"><path d="M0.5 10.5H8.5V4.5L4.5 1L0.5 4.5Z" fill="#fff" stroke="#8a8a8a" stroke-width="1"/><path d="M2.5 6.5H6.5" stroke="#555" stroke-width="1"/></svg>
<svg class="a" style="left:326px;top:346px" width="58" height="3" shape-rendering="crispEdges"><defs><pattern id="wv11" width="4" height="3" patternUnits="userSpaceOnUse"><rect x="0" y="0" width="1" height="1" fill="#3c9c3c"/><rect x="1" y="1" width="1" height="1" fill="#3c9c3c"/><rect x="2" y="2" width="1" height="1" fill="#3c9c3c"/><rect x="3" y="1" width="1" height="1" fill="#3c9c3c"/></pattern></defs><rect width="58" height="3" fill="url(#wv11)"/></svg>
<svg class="a" style="left:255px;top:606px" width="10" height="11" viewBox="0 0 10 11"><path d="M0.5 10.5H8.5V4.5L4.5 1L0.5 4.5Z" fill="#fff" stroke="#8a8a8a" stroke-width="1"/><path d="M2.5 6.5H6.5" stroke="#555" stroke-width="1"/></svg>
<div class="a" style="left:295px;top:417px;width:1px;height:17px;background:#e4e4e4"></div>
<div class="a" style="left:295px;top:485px;width:1px;height:17px;background:#e4e4e4"></div>
<svg class="a" style="left:660px;top:62px" width="12" height="12" viewBox="0 0 12 12"><rect x="0.5" y="0.5" width="11" height="10" fill="#f4f4f4" stroke="#888"/><path d="M3 2.5H4M5.5 2.5H6.5M8 2.5H9" stroke="#333"/><ellipse cx="6" cy="6.5" rx="4" ry="2" fill="none" stroke="#333"/><circle cx="6" cy="6.5" r="1.3" fill="#333"/><rect x="0" y="10" width="12" height="2" fill="#e05050"/></svg>
<div class="a" style="left:666px;top:77px;width:10px;height:112px;border:1px solid #c4c4c4;border-radius:3px;background:linear-gradient(90deg,#ececec,#d8d8d8)"></div>
<div class="a" style="left:660px;top:150px;width:6px;height:3px;background:#d80000;border-radius:1px"></div>
<div class="a" style="left:667px;top:150px;width:4px;height:3px;background:#e6c0c0"></div>
<div class="a" style="left:660px;top:164px;width:6px;height:3px;background:#d80000;border-radius:1px"></div>
<div class="a" style="left:667px;top:164px;width:4px;height:3px;background:#e6c0c0"></div>
<div class="a" style="left:660px;top:309px;width:11px;height:3px;background:#d6d600;border-radius:1px"></div>
<div class="a" style="left:0;top:612px;width:234px;height:9px;background:#f2f2f2;border-top:1px solid #e2e2e2"></div>
<div class="a" style="left:221px;top:612px;width:1px;height:9px;background:#e2e2e2"></div>
<div class="a" style="left:0;top:615px;width:113px;height:8px;border:1px solid #c4c4c4;border-radius:3px;background:linear-gradient(#ececec,#d8d8d8)"></div>
<div class="a" style="left:235px;top:612px;width:440px;height:9px;background:#f2f2f2;border-top:1px solid #e2e2e2"></div>
<div class="a" style="left:259px;top:612px;width:1px;height:9px;background:#e2e2e2"></div>
<div class="a" style="left:655px;top:612px;width:1px;height:9px;background:#e2e2e2"></div>
<div class="a" style="left:266px;top:615px;width:179px;height:8px;border:1px solid #c4c4c4;border-radius:3px;background:linear-gradient(#ececec,#d8d8d8)"></div>
</body></html>
